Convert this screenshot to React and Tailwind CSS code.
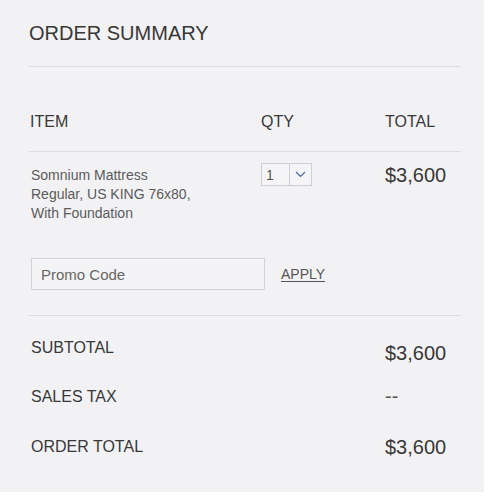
import React from 'react';

const font = { fontFamily: '"Liberation Sans", Arial, sans-serif' };

const QtySelect = () => (
  <div className="flex h-[23px] w-[51px] border border-[#cfcfd2] bg-[#f5f5f7]">
    <div className="flex w-[28px] items-center border-r border-[#cfcfd2] pl-[4px] text-[14px] leading-none text-[#555]">1</div>
    <div className="flex flex-1 items-center justify-center">
      <svg width="11" height="7" viewBox="0 0 11 7" fill="none">
        <polyline points="1,1 5.5,5.5 10,1" stroke="#4a67a3" strokeWidth="1.2" />
      </svg>
    </div>
  </div>
);

const App = () => {
  return (
    <div className="min-h-[502px] w-[488px] bg-white" style={font}>
      <div className="h-[492px] w-[484px] bg-[#f2f2f4] pl-[29px] pr-[23px]">
        {/* Title */}
        <div className="h-[67px] border-b border-[#dcdcdf] pt-[23px]">
          <h1 className="text-[20px] leading-none text-[#383838]">ORDER SUMMARY</h1>
        </div>

        {/* Table header */}
        <div className="grid h-[85px] grid-cols-[232px_124px_1fr] border-b border-[#dcdcdf] pt-[47px] text-[16px] leading-none text-[#383838]">
          <span className="pl-[1px]">ITEM</span>
          <span>QTY</span>
          <span>TOTAL</span>
        </div>

        {/* Item row */}
        <div className="grid grid-cols-[232px_124px_1fr] items-start">
          <div className="pl-[2px] pt-[14px] text-[14px] leading-[19px] text-[#5a5a5a]">
            <p>Somnium Mattress</p>
            <p>Regular, US KING 76x80,</p>
            <p>With Foundation</p>
          </div>
          <div className="pt-[11px]">
            <QtySelect />
          </div>
          <div className="pt-[13px] text-[20px] leading-none text-[#383838]">$3,600</div>
        </div>

        {/* Promo */}
        <div className="flex h-[93px] items-start border-b border-[#dcdcdf] pt-[35px]">
          <input
            type="text"
            placeholder="Promo Code"
            className="ml-[2px] h-[32px] w-[234px] border border-[#d2d2d5] bg-[#f4f4f6] pl-[9px] text-[15px] text-[#555] placeholder:text-[#666] focus:outline-none"
          />
          <a href="#" className="ml-[16px] mt-[8px] text-[14px] leading-[16px] text-[#555] underline underline-offset-[2px]">
            APPLY
          </a>
        </div>

        {/* Totals */}
        <div className="pt-[24px] text-[#383838]">
          <div className="grid h-[49px] grid-cols-[356px_1fr] items-start">
            <span className="pl-[2px] text-[16px] leading-none">SUBTOTAL</span>
            <span className="mt-[3px] text-[20px] leading-none">$3,600</span>
          </div>
          <div className="grid h-[50px] grid-cols-[356px_1fr] items-start">
            <span className="pl-[2px] text-[16px] leading-none">SALES TAX</span>
            <span className="mt-[-3px] text-[20px] leading-none text-[#555]">--</span>
          </div>
          <div className="grid grid-cols-[356px_1fr] items-start">
            <span className="pl-[2px] text-[16px] leading-none">ORDER TOTAL</span>
            <span className="mt-[-2px] text-[20px] leading-none">$3,600</span>
          </div>
        </div>
      </div>
    </div>
  );
};

export default App;
